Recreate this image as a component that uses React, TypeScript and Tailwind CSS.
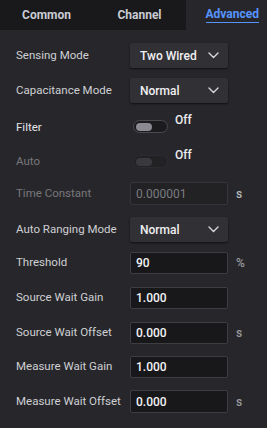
import React from "react";

const Chevron = () => (
  <svg width="11" height="7" viewBox="0 0 11 7" fill="none">
    <path d="M1 1l4.5 4.5L10 1" stroke="#d8d8dc" strokeWidth="1.4" strokeLinecap="round" strokeLinejoin="round" />
  </svg>
);

const Select = ({ value }: { value: string }) => (
  <div className="w-[98px] h-[25px] bg-[#303035] rounded-[2px] shadow-[0_1px_2px_rgba(0,0,0,0.6)] flex items-center justify-between pl-[10px] pr-[9px] text-[12px] text-[#f0f0f2] font-medium">
    <span>{value}</span>
    <Chevron />
  </div>
);

const Input = ({ value, disabled }: { value: string; disabled?: boolean }) => (
  <div
    className={`w-[98px] h-full rounded-[2px] border flex items-center pl-[5px] text-[12px] ${
      disabled ? "bg-[#222225] border-[#36363a] text-[#7c7c80]" : "bg-[#18181b] border-[#3d3d42] text-[#f2f2f4] font-medium"
    }`}
  >
    {value}
  </div>
);

const Toggle = ({ disabled }: { disabled?: boolean }) => (
  <div className="flex items-start gap-[7px]">
    <div
      className={`mt-[7px] w-[35px] h-[13px] rounded-full border flex items-center px-[2px] ${
        disabled ? "border-[#2c2c30] bg-[#222225]" : "border-[#4a4a50] bg-[#1c1c1f]"
      }`}
    >
      <div className={`w-[16px] h-[8px] rounded-full ${disabled ? "bg-[#3a3a3e]" : "bg-[#8a8a90]"}`} />
    </div>
    <span className="text-[12px] font-medium text-[#ececee] leading-[14px]">Off</span>
  </div>
);

const Row = ({
  label,
  dim,
  children,
  unit,
  h,
}: {
  label: string;
  dim?: boolean;
  children: React.ReactNode;
  unit?: string;
  h: string;
}) => (
  <div className={`flex items-center ${h}`}>
    <div className={`w-[114px] text-[11.5px] ${dim ? "text-[#77777b]" : "text-[#cfcfd3]"}`}>{label}</div>
    {children}
    {unit && <span className={`ml-[8px] text-[12px] ${dim ? "text-[#b8b8bc]" : "text-[#9a9a9e]"} font-medium`}>{unit}</span>}
  </div>
);

export default function App() {
  return (
    <div
      className="w-[267px] h-[428px] bg-[#27272b] overflow-hidden"
      style={{ fontFamily: "Roboto, 'Liberation Sans', Arial, sans-serif" }}
    >
      <div className="flex h-[30px]">
        <div className="flex w-[186px] bg-[#19191c]">
          <div className="w-[93px] flex items-center justify-center text-[12px] font-bold text-[#c9ccd2]">Common</div>
          <div className="w-[93px] flex items-center justify-center text-[12px] font-bold text-[#c9ccd2]">Channel</div>
        </div>
        <div className="flex-1 flex justify-end pr-[8px]">
          <div className="relative flex items-center h-[30px] pb-[2px] text-[12px] font-bold text-[#5794ff]">
            Advanced
            <div className="absolute left-0 right-0 bottom-[7px] h-[1.5px] bg-[#5794ff]" />
          </div>
        </div>
      </div>
      <div className="pl-[16px] pt-[13px] flex flex-col">
        <Row label="Sensing Mode" h="h-[25px]"><Select value="Two Wired" /></Row>
        <div className="h-[10px]" />
        <Row label="Capacitance Mode" h="h-[25px]"><Select value="Normal" /></Row>
        <div className="flex items-start h-[35px] pt-[10px]">
          <div className="w-[117px] text-[11.5px] text-[#e4e4e8] pt-[6px]">Filter</div>
          <Toggle />
        </div>
        <div className="flex items-start h-[44px] pt-[10px]">
          <div className="w-[117px] text-[11.5px] text-[#77777b] pt-[5px]">Auto</div>
          <Toggle disabled />
        </div>
        <Row label="Time Constant" dim unit="s" h="h-[23px]"><Input value="0.000001" disabled /></Row>
        <div className="h-[12px]" />
        <Row label="Auto Ranging Mode" h="h-[25px]"><Select value="Normal" /></Row>
        <div className="h-[10px]" />
        <Row label="Threshold" unit="%" h="h-[22px]"><Input value="90" /></Row>
        <div className="h-[13px]" />
        <Row label="Source Wait Gain" h="h-[22px]"><Input value="1.000" /></Row>
        <div className="h-[13px]" />
        <Row label="Source Wait Offset" unit="s" h="h-[22px]"><Input value="0.000" /></Row>
        <div className="h-[12px]" />
        <Row label="Measure Wait Gain" h="h-[22px]"><Input value="1.000" /></Row>
        <div className="h-[12px]" />
        <Row label="Measure Wait Offset" unit="s" h="h-[23px]"><Input value="0.000" /></Row>
      </div>
    </div>
  );
}
